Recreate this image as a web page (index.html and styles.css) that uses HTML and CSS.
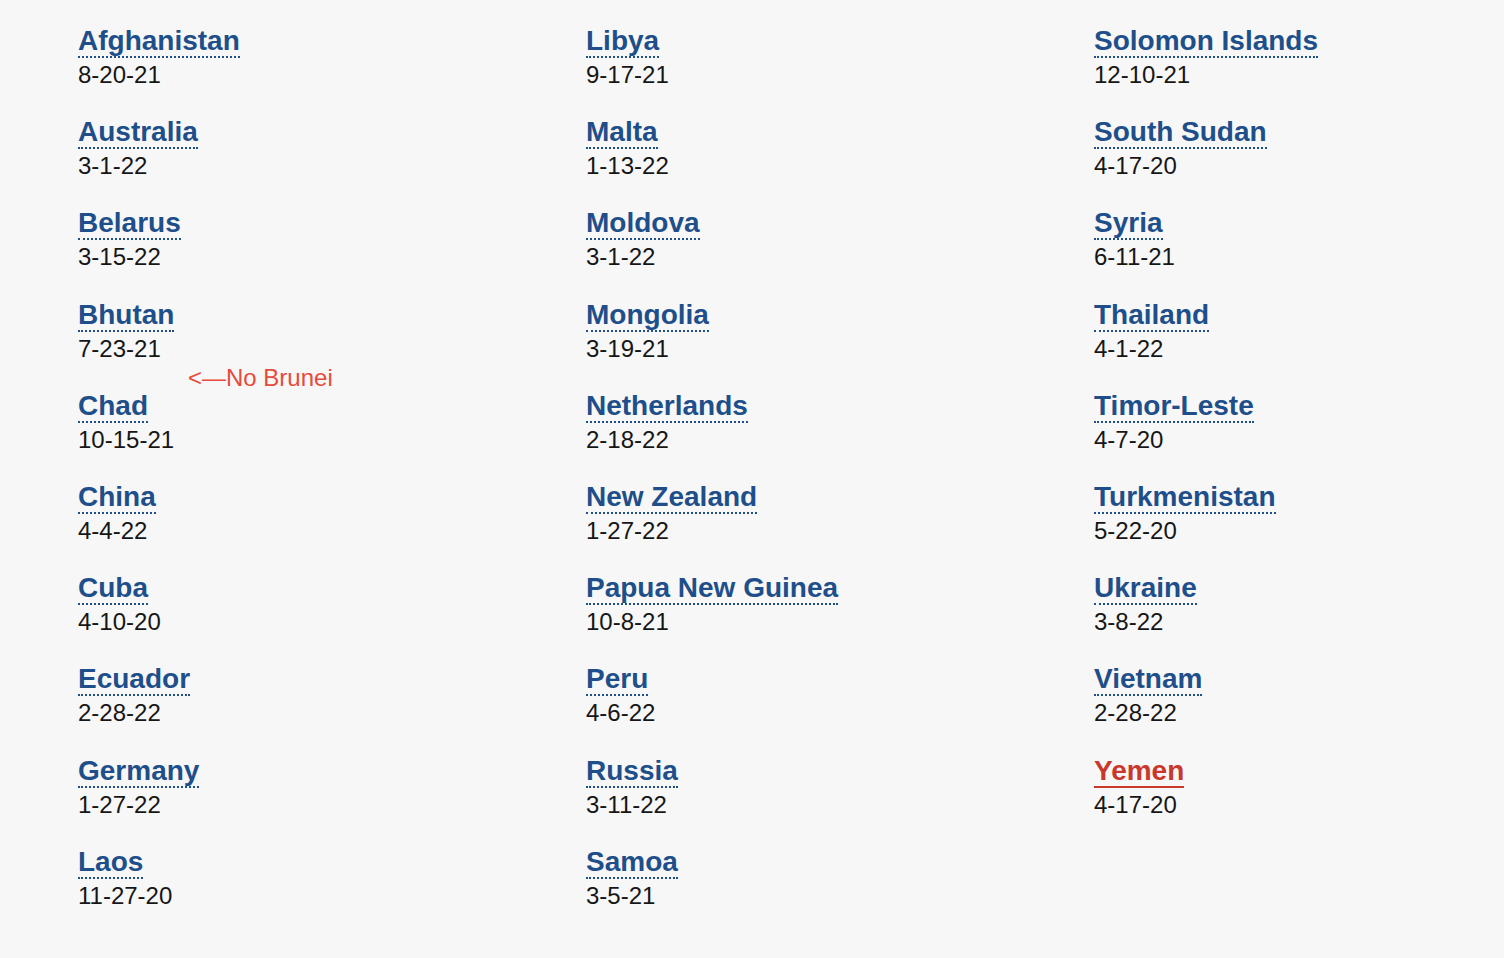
FILE: index.html
```html
<!DOCTYPE html>
<html>
<head>
<meta charset="utf-8">
<link rel="stylesheet" href="styles.css">
</head>
<body>
<div class="page">
  <div class="col">
    <div class="entry"><a class="name">Afghanistan</a><div class="date">8-20-21</div></div>
    <div class="entry"><a class="name">Australia</a><div class="date">3-1-22</div></div>
    <div class="entry"><a class="name">Belarus</a><div class="date">3-15-22</div></div>
    <div class="entry"><a class="name">Bhutan</a><div class="date">7-23-21</div></div>
    <div class="entry"><span class="note">&lt;—No Brunei</span><a class="name">Chad</a><div class="date">10-15-21</div></div>
    <div class="entry"><a class="name">China</a><div class="date">4-4-22</div></div>
    <div class="entry"><a class="name">Cuba</a><div class="date">4-10-20</div></div>
    <div class="entry"><a class="name">Ecuador</a><div class="date">2-28-22</div></div>
    <div class="entry"><a class="name">Germany</a><div class="date">1-27-22</div></div>
    <div class="entry"><a class="name">Laos</a><div class="date">11-27-20</div></div>
  </div>
  <div class="col">
    <div class="entry"><a class="name">Libya</a><div class="date">9-17-21</div></div>
    <div class="entry"><a class="name">Malta</a><div class="date">1-13-22</div></div>
    <div class="entry"><a class="name">Moldova</a><div class="date">3-1-22</div></div>
    <div class="entry"><a class="name">Mongolia</a><div class="date">3-19-21</div></div>
    <div class="entry"><a class="name">Netherlands</a><div class="date">2-18-22</div></div>
    <div class="entry"><a class="name">New Zealand</a><div class="date">1-27-22</div></div>
    <div class="entry"><a class="name">Papua New Guinea</a><div class="date">10-8-21</div></div>
    <div class="entry"><a class="name">Peru</a><div class="date">4-6-22</div></div>
    <div class="entry"><a class="name">Russia</a><div class="date">3-11-22</div></div>
    <div class="entry"><a class="name">Samoa</a><div class="date">3-5-21</div></div>
  </div>
  <div class="col">
    <div class="entry"><a class="name">Solomon Islands</a><div class="date">12-10-21</div></div>
    <div class="entry"><a class="name">South Sudan</a><div class="date">4-17-20</div></div>
    <div class="entry"><a class="name">Syria</a><div class="date">6-11-21</div></div>
    <div class="entry"><a class="name">Thailand</a><div class="date">4-1-22</div></div>
    <div class="entry"><a class="name">Timor-Leste</a><div class="date">4-7-20</div></div>
    <div class="entry"><a class="name">Turkmenistan</a><div class="date">5-22-20</div></div>
    <div class="entry"><a class="name">Ukraine</a><div class="date">3-8-22</div></div>
    <div class="entry"><a class="name">Vietnam</a><div class="date">2-28-22</div></div>
    <div class="entry"><a class="name active">Yemen</a><div class="date">4-17-20</div></div>
  </div>
</div>
</body>
</html>
```

FILE: styles.css
```css
html, body {
  margin: 0;
  padding: 0;
  background: #f7f7f7;
}
body {
  font-family: "Liberation Sans", Arial, Helvetica, sans-serif;
  color: #161616;
}
.page {
  display: grid;
  grid-template-columns: 508px 508px 1fr;
  padding: 25px 0 0 78px;
}
.col {
  display: flex;
  flex-direction: column;
}
.entry {
  position: relative;
  height: 91.2px;
  display: flex;
  flex-direction: column;
  align-items: flex-start;
}
.name {
  font-size: 28px;
  font-weight: bold;
  color: #1e4f8a;
  line-height: 31px;
  border-bottom: 2px dotted #1e4f8a;
  text-decoration: none;
  cursor: pointer;
}
.name.active {
  color: #c9382c;
  border-bottom: 2px solid #c9382c;
}
.date {
  font-size: 24px;
  line-height: 32px;
  margin-top: 1px;
}
.note {
  position: absolute;
  left: 110px;
  top: -26px;
  font-size: 24px;
  line-height: 28px;
  color: #e84a3c;
  white-space: nowrap;
}
```
